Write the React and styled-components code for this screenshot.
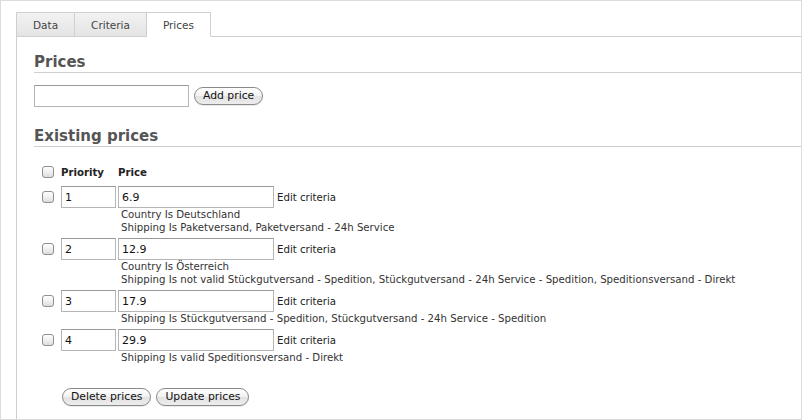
import React from 'react'
import styled, { createGlobalStyle } from 'styled-components'

const GlobalStyle = createGlobalStyle`
  html, body {
    margin: 0;
    padding: 0;
    background: #fff;
  }
  body {
    font-family: "DejaVu Sans", Verdana, sans-serif;
    font-size: 10.2px;
    color: #333;
  }
`;

const prices = [
  { priority: '1', price: '6.9', criteria: ['Country Is Deutschland', 'Shipping Is Paketversand, Paketversand - 24h Service'] },
  { priority: '2', price: '12.9', criteria: ['Country Is Österreich', 'Shipping Is not valid Stückgutversand - Spedition, Stückgutversand - 24h Service - Spedition, Speditionsversand - Direkt'] },
  { priority: '3', price: '17.9', criteria: ['Shipping Is Stückgutversand - Spedition, Stückgutversand - 24h Service - Spedition'] },
  { priority: '4', price: '29.9', criteria: ['Shipping Is valid Speditionsversand - Direkt'] },
];

const tabs = ['Data', 'Criteria', 'Prices'];

function App() {
  return (
    <Frame>
      <GlobalStyle />
      <Panel>
        <TabStrip>
          {tabs.map((tab) => (
            <Tab key={tab} $active={tab === 'Prices'}>{tab}</Tab>
          ))}
          <TabFill />
        </TabStrip>
        <Content>
          <Heading $top={16}>Prices</Heading>
          <AddRow>
            <TextInput $width={155} />
            <PillButton>Add price</PillButton>
          </AddRow>
          <Heading $top={20}>Existing prices</Heading>
          <PriceTable>
            <HeadRow>
              <Check />
              <HeadCell>Priority</HeadCell>
              <HeadCell>Price</HeadCell>
            </HeadRow>
            {prices.map((p) => (
              <PriceRow key={p.priority}>
                <Check />
                <TextInput $width={55} defaultValue={p.priority} />
                <PriceCell>
                  <TextInput $width={156} defaultValue={p.price} />
                  <EditLink>Edit criteria</EditLink>
                </PriceCell>
                <Criteria>
                  {p.criteria.map((line) => (
                    <div key={line}>{line}</div>
                  ))}
                </Criteria>
              </PriceRow>
            ))}
          </PriceTable>
          <Actions>
            <PillButton>Delete prices</PillButton>
            <PillButton>Update prices</PillButton>
          </Actions>
        </Content>
      </Panel>
    </Frame>
  )
}

const Frame = styled.div`
  width: 802px;
  height: 420px;
  box-sizing: border-box;
  border: 1px solid #dcdcdc;
  padding: 11px 0 0 15px;
  overflow: hidden;
`;

const Panel = styled.div`
  height: 100%;
  border-left: 1px solid #cfcfcf;
`;

const TabStrip = styled.div`
  display: flex;
  height: 25px;
`;

const Tab = styled.div`
  box-sizing: border-box;
  height: 25px;
  padding: 0 16px;
  display: flex;
  align-items: center;
  border-top: 1px solid #cfcfcf;
  border-right: 1px solid #cfcfcf;
  border-bottom: 1px solid ${(p) => (p.$active ? '#fff' : '#cfcfcf')};
  background: ${(p) => (p.$active ? '#fff' : 'linear-gradient(#f2f2f2, #e4e4e4)')};
  color: #444;
  font-size: 10.5px;
`;

const TabFill = styled.div`
  flex: 1;
  border-bottom: 1px solid #cfcfcf;
`;

const Content = styled.div`
  padding-left: 17px;
`;

const Heading = styled.h2`
  margin: ${(p) => p.$top}px 0 0;
  height: 19px;
  line-height: 19px;
  font-size: 15px;
  font-weight: bold;
  color: #555;
  border-bottom: 1px solid #cfcfcf;
`;

const AddRow = styled.div`
  display: flex;
  align-items: center;
  gap: 5px;
  margin-top: 12px;
`;

const TextInput = styled.input`
  box-sizing: border-box;
  width: ${(p) => p.$width}px;
  height: 22px;
  margin: 0;
  padding: 0 0 0 3px;
  border: 1px solid #b5b5b5;
  border-top-color: #999;
  font-family: "DejaVu Sans", Verdana, sans-serif;
  font-size: 11px;
  color: #111;
  background: #fff;
  outline: none;
`;

const PillButton = styled.button`
  box-sizing: border-box;
  height: 18px;
  padding: 0 8px;
  border: 1px solid #8a8a8a;
  border-radius: 9px;
  background: linear-gradient(#ffffff, #f1f1f1 50%, #e3e3e3 51%, #ececec);
  box-shadow: 0 1px 0 rgba(0, 0, 0, 0.08);
  font-family: "DejaVu Sans", "Lucida Grande", sans-serif;
  font-size: 10.8px;
  line-height: 16px;
  color: #111;
`;

const PriceTable = styled.div`
  margin-top: 16px;
  display: flex;
  flex-direction: column;
`;

const rowColumns = `
  display: grid;
  grid-template-columns: 27px 57px auto;
  align-items: center;
`;

const HeadRow = styled.div`
  ${rowColumns}
  height: 18px;
  margin-bottom: 5px;
`;

const HeadCell = styled.div`
  font-weight: bold;
  font-size: 10.2px;
  color: #222;
`;

const PriceRow = styled.div`
  ${rowColumns}
  margin-bottom: 4px;
`;

const Check = styled.input.attrs({ type: 'checkbox' })`
  appearance: none;
  box-sizing: border-box;
  width: 12px;
  height: 12px;
  margin: 0 0 0 8px;
  border: 1px solid #8f8f8f;
  border-radius: 3px;
  background: linear-gradient(#ffffff, #ececec 60%, #dcdcdc);
  box-shadow: inset 0 1px 1px rgba(255, 255, 255, 0.9);
`;

const PriceCell = styled.div`
  display: flex;
  align-items: center;
  gap: 3px;
`;

const EditLink = styled.span`
  color: #222;
  font-size: 10.2px;
`;

const Criteria = styled.div`
  grid-column: 3;
  padding-left: 3px;
  line-height: 13px;
  font-size: 10.2px;
  color: #333;
`;

const Actions = styled.div`
  display: flex;
  gap: 5px;
  margin: 20px 0 0 28px;
`;

export default App
